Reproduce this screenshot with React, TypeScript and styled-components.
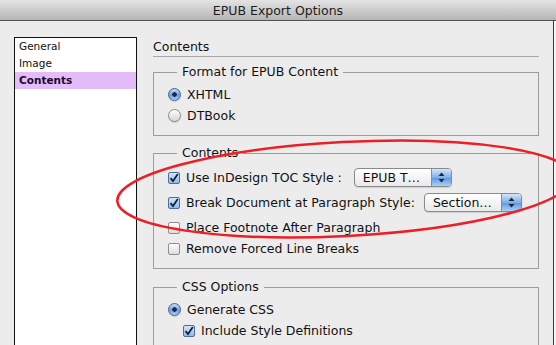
import styled, { createGlobalStyle } from 'styled-components';

const GlobalStyle = createGlobalStyle`
  html, body {
    margin: 0;
    padding: 0;
    background: #ececec;
  }
  body {
    font-family: "DejaVu Sans", "Liberation Sans", sans-serif;
    color: #111;
  }
`;

const Window = styled.div`
  position: relative;
  width: 556px;
  height: 345px;
  overflow: hidden;
  background: #ececec;
  display: flex;
  flex-direction: column;
`;

const TitleBar = styled.div`
  height: 20px;
  flex: none;
  display: flex;
  align-items: center;
  justify-content: center;
  background: linear-gradient(#e4e4e4, #b4b4b4);
  border-bottom: 1px solid #515151;
  font-size: 12.5px;
  color: #1c1c1c;
`;

const Body = styled.div`
  flex: 1;
  display: flex;
  min-height: 0;
`;

const Main = styled.div`
  flex: 1;
  display: flex;
  gap: 16px;
  padding: 16px 14px 0 14px;
`;

const EdgeStrip = styled.div`
  width: 2px;
  flex: none;
  border-left: 1px solid #3a3a3a;
  background: #f7f7f7;
`;

const SideList = styled.div`
  width: 121px;
  height: 400px;
  flex: none;
  background: #fff;
  border: 1px solid #111;
`;

const ListItem = styled.div<{ $active?: boolean }>`
  height: 17px;
  line-height: 17px;
  padding-left: 4px;
  font-size: 10.5px;
  font-weight: ${(p) => (p.$active ? 'bold' : 'normal')};
  background: ${(p) => (p.$active ? '#e4bcf8' : 'transparent')};
  color: ${(p) => (p.$active ? '#1a0a30' : '#111')};
`;

const Content = styled.div`
  width: 386px;
  display: flex;
  flex-direction: column;
  padding-top: 1px;
`;

const Heading = styled.div`
  font-size: 12.5px;
  height: 18px;
  line-height: 18px;
  border-bottom: 1px solid #a8a8a8;
  margin-bottom: 7px;
`;

const Group = styled.fieldset<{ $space?: number }>`
  margin: ${(p) => p.$space ?? 0}px 0 0 0;
  padding: 4px 0 9px 14px;
  border: 1px solid #9c9c9c;
  display: flex;
  flex-direction: column;
`;

const Legend = styled.legend`
  margin-left: 9px;
  padding: 0 5px;
  font-size: 12.5px;
  line-height: 16px;
`;

const Row = styled.div<{ $tall?: boolean; $indent?: number; $lift?: number }>`
  height: ${(p) => (p.$tall ? 25 : 21)}px;
  margin-top: ${(p) => p.$lift ?? 0}px;
  display: flex;
  align-items: center;
  gap: 6px;
  padding-left: ${(p) => p.$indent ?? 0}px;
  font-size: 12.5px;
  white-space: nowrap;
`;

const Label = styled.span`
  line-height: 16px;
`;

const RadioDot = styled.span<{ $on?: boolean }>`
  width: 13px;
  height: 13px;
  flex: none;
  border-radius: 50%;
  box-sizing: border-box;
  border: 1px solid ${(p) => (p.$on ? '#3f6596' : '#8a8a8a')};
  background: ${(p) =>
    p.$on
      ? 'radial-gradient(circle at 50% 50%, #1b2a4a 0 2px, transparent 2.5px), linear-gradient(#c6ddf6, #6c9fdc 55%, #a9cdf5)'
      : 'linear-gradient(#fdfdfd, #d6d6d6)'};
  box-shadow: 0 1px 1px rgba(0, 0, 0, 0.15);
`;

const CheckBox = styled.span<{ $on?: boolean }>`
  width: 12px;
  height: 12px;
  flex: none;
  box-sizing: border-box;
  border-radius: 2px;
  border: 1px solid ${(p) => (p.$on ? '#4d6f9c' : '#8e8e8e')};
  background: ${(p) =>
    p.$on ? 'linear-gradient(#d5e6f8, #8eb9ea)' : 'linear-gradient(#fdfdfd, #dcdcdc)'};
  display: flex;
  align-items: center;
  justify-content: center;
  svg {
    display: block;
  }
`;

const Popup = styled.div<{ $width: number; $offset: number }>`
  width: ${(p) => p.$width}px;
  height: 19px;
  margin-left: ${(p) => p.$offset}px;
  box-sizing: border-box;
  border: 1px solid #8a8a8a;
  border-radius: 4px;
  background: linear-gradient(#ffffff, #e9e9e9);
  display: flex;
  overflow: hidden;
  box-shadow: 0 1px 1px rgba(0, 0, 0, 0.12);
`;

const PopupText = styled.span`
  flex: 1;
  padding-left: 8px;
  line-height: 17px;
  font-size: 12.5px;
`;

const PopupArrows = styled.span`
  width: 19px;
  flex: none;
  border-left: 1px solid #6f8fbf;
  background: linear-gradient(#d4e5f9, #7eaee9 50%, #5b95e0 51%, #a9d0f8);
  display: flex;
  align-items: center;
  justify-content: center;
`;

const Annotation = styled.svg`
  position: absolute;
  left: 0;
  top: 0;
  pointer-events: none;
`;

function Check({ on }: { on?: boolean }) {
  return (
    <CheckBox $on={on}>
      {on && (
        <svg width="10" height="10" viewBox="0 0 10 10">
          <path d="M1.5 5.2 L4 8 L8.8 1" fill="none" stroke="#13203d" strokeWidth="1.8" />
        </svg>
      )}
    </CheckBox>
  );
}

function Select({ text, width, offset }: { text: string; width: number; offset: number }) {
  return (
    <Popup $width={width} $offset={offset}>
      <PopupText>{text}</PopupText>
      <PopupArrows>
        <svg width="7" height="11" viewBox="0 0 7 11">
          <path d="M3.5 0.5 L6.5 4 L0.5 4 Z M0.5 7 L6.5 7 L3.5 10.5 Z" fill="#1d2636" />
        </svg>
      </PopupArrows>
    </Popup>
  );
}

export default function App() {
  return (
    <>
      <GlobalStyle />
      <Window>
        <TitleBar>EPUB Export Options</TitleBar>
        <Body>
          <Main>
            <SideList>
              <ListItem>General</ListItem>
              <ListItem>Image</ListItem>
              <ListItem $active>Contents</ListItem>
            </SideList>
            <Content>
              <Heading>Contents</Heading>

              <Group>
                <Legend>Format for EPUB Content</Legend>
                <Row>
                  <RadioDot $on />
                  <Label>XHTML</Label>
                </Row>
                <Row>
                  <RadioDot />
                  <Label>DTBook</Label>
                </Row>
              </Group>

              <Group $space={9}>
                <Legend>Contents</Legend>
                <Row $tall>
                  <Check on />
                  <Label>Use InDesign TOC Style :</Label>
                  <Select text="EPUB T…" width={98} offset={6} />
                </Row>
                <Row $tall>
                  <Check on />
                  <Label>Break Document at Paragraph Style:</Label>
                  <Select text="Section…" width={98} offset={3} />
                </Row>
                <Row $lift={2}>
                  <Check />
                  <Label>Place Footnote After Paragraph</Label>
                </Row>
                <Row>
                  <Check />
                  <Label>Remove Forced Line Breaks</Label>
                </Row>
              </Group>

              <Group $space={10}>
                <Legend>CSS Options</Legend>
                <Row>
                  <RadioDot $on />
                  <Label>Generate CSS</Label>
                </Row>
                <Row $indent={15}>
                  <Check on />
                  <Label>Include Style Definitions</Label>
                </Row>
                <Row $indent={15}>
                  <Check />
                  <Label>Preserve Local Overrides</Label>
                </Row>
              </Group>
            </Content>
          </Main>
          <EdgeStrip />
        </Body>
        <Annotation width="556" height="345" viewBox="0 0 556 345">
          <ellipse
            cx="345"
            cy="189"
            rx="228"
            ry="47"
            transform="rotate(-3 345 189)"
            fill="none"
            stroke="#ec1f26"
            strokeWidth="2.5"
          />
        </Annotation>
      </Window>
    </>
  );
}
